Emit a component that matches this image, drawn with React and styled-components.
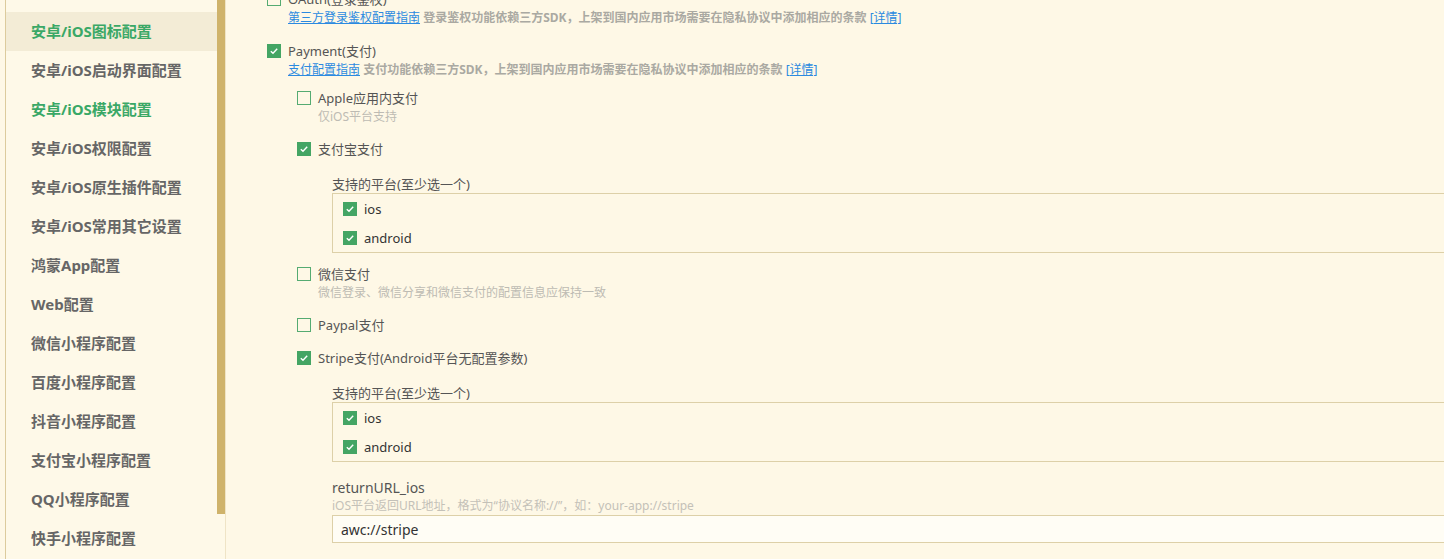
import React from 'react'
import styled, { createGlobalStyle } from 'styled-components'

const GlobalStyle = createGlobalStyle`
  html, body {
    margin: 0;
    padding: 0;
    background: #fef8e6;
  }
  body {
    font-family: "Noto Sans", "Noto Sans CJK SC", sans-serif;
  }
`

const menu = [
  { label: '安卓/iOS图标配置', state: 'active' },
  { label: '安卓/iOS启动界面配置' },
  { label: '安卓/iOS模块配置', state: 'green' },
  { label: '安卓/iOS权限配置' },
  { label: '安卓/iOS原生插件配置' },
  { label: '安卓/iOS常用其它设置' },
  { label: '鸿蒙App配置' },
  { label: 'Web配置' },
  { label: '微信小程序配置' },
  { label: '百度小程序配置' },
  { label: '抖音小程序配置' },
  { label: '支付宝小程序配置' },
  { label: 'QQ小程序配置' },
  { label: '快手小程序配置' },
]

const Check = ({ checked }) => (
  <Box $checked={checked}>
    {checked && (
      <svg width="10" height="10" viewBox="0 0 10 10">
        <polyline points="1.8,5.2 4,7.3 8.2,2.8" fill="none" stroke="#fff" strokeWidth="1.4" />
      </svg>
    )}
  </Box>
)

const Platforms = () => (
  <PlatformSection>
    <PlatformLabel>支持的平台(至少选一个)</PlatformLabel>
    <PlatformBox>
      <Option><Check checked /><Text>ios</Text></Option>
      <Option><Check checked /><Text>android</Text></Option>
    </PlatformBox>
  </PlatformSection>
)

const App = () => {
  return (
    <Page>
      <GlobalStyle />
      <Sidebar>
        <Menu>
          {menu.map((m) => (
            <MenuItem key={m.label} $state={m.state}>{m.label}</MenuItem>
          ))}
        </Menu>
        <Track>
          <Thumb />
        </Track>
      </Sidebar>

      <Main>
        <Content>
          <Block>
            <Row><Check /><Text>OAuth(登录鉴权)</Text></Row>
            <Note>
              <Link>第三方登录鉴权配置指南</Link> 登录鉴权功能依赖三方SDK，上架到国内应用市场需要在隐私协议中添加相应的条款 <Link>[详情]</Link>
            </Note>
          </Block>

          <Block>
            <Row><Check checked /><Text>Payment(支付)</Text></Row>
            <Note>
              <Link>支付配置指南</Link> 支付功能依赖三方SDK，上架到国内应用市场需要在隐私协议中添加相应的条款 <Link>[详情]</Link>
            </Note>

            <Nested>
              <Item>
                <Row><Check /><Text>Apple应用内支付</Text></Row>
                <Desc>仅iOS平台支持</Desc>
              </Item>
              <Item>
                <Row><Check checked /><Text>支付宝支付</Text></Row>
                <Platforms />
              </Item>
              <Item>
                <Row><Check /><Text>微信支付</Text></Row>
                <Desc>微信登录、微信分享和微信支付的配置信息应保持一致</Desc>
              </Item>
              <Item>
                <Row><Check /><Text>Paypal支付</Text></Row>
              </Item>
              <Item>
                <Row><Check checked /><Text>Stripe支付(Android平台无配置参数)</Text></Row>
                <Platforms />
                <Field>
                  <FieldLabel>returnURL_ios</FieldLabel>
                  <FieldDesc>iOS平台返回URL地址，格式为“协议名称://”，如：your-app://stripe</FieldDesc>
                  <Input defaultValue="awc://stripe" />
                </Field>
              </Item>
            </Nested>
          </Block>
        </Content>
      </Main>
    </Page>
  )
}

const Page = styled.div`
  display: flex;
  height: 559px;
  overflow: hidden;
  background: #fef8e6;
`

const Sidebar = styled.aside`
  display: flex;
  flex-shrink: 0;
  margin-left: 5px;
  border-left: 1px solid #dccb9d;
  border-right: 1px solid #efe4c6;
  background: #fef9e8;
`

const Menu = styled.ul`
  list-style: none;
  margin: 0;
  padding: 12px 0 0;
  width: 211px;
`

const MenuItem = styled.li`
  height: 39px;
  box-sizing: border-box;
  line-height: 38px;
  padding: 0 0 1px 25px;
  font-size: 15px;
  font-weight: 700;
  white-space: nowrap;
  color: ${(p) => (p.$state ? '#3aa866' : '#666')};
  background: ${(p) => (p.$state === 'active' ? '#f3ecd6' : 'transparent')};
`

const Track = styled.div`
  width: 8px;
`

const Thumb = styled.div`
  height: 514px;
  background: #cfb36b;
`

const Main = styled.main`
  flex: 1;
  min-width: 0;
  overflow: hidden;
  padding-left: 41px;
`

const Content = styled.div`
  margin-top: -11px;
`

const Block = styled.section`
  margin-bottom: 14px;
`

const Row = styled.label`
  display: flex;
  align-items: center;
  gap: 7px;
  height: 20px;
  font-size: 13px;
  color: #555;
  white-space: nowrap;
`

const Text = styled.span`
  line-height: 18px;
  padding-bottom: 1px;
`

const Box = styled.span`
  box-sizing: border-box;
  width: 14px;
  height: 14px;
  flex-shrink: 0;
  display: grid;
  place-items: center;
  border: 1px solid ${(p) => (p.$checked ? '#44a564' : '#55ab72')};
  background: ${(p) => (p.$checked ? '#44a564' : 'transparent')};
`

const Note = styled.div`
  padding-left: 21px;
  font-size: 12px;
  line-height: 18px;
  font-weight: 700;
  color: #aaa9a2;
  white-space: nowrap;
`

const Link = styled.a`
  color: #2b8ae0;
  font-weight: 400;
  text-decoration: underline;
  cursor: pointer;
`

const Desc = styled.div`
  padding-left: 21px;
  font-size: 12px;
  line-height: 18px;
  color: #bdbbb3;
  white-space: nowrap;
`

const Nested = styled.div`
  margin-top: 9px;
  padding-left: 30px;
`

const Item = styled.div`
  margin-bottom: 13px;
`

const PlatformSection = styled.div`
  margin: 16px -20px -2px 35px;
`

const PlatformLabel = styled.div`
  font-size: 13px;
  line-height: 18px;
  color: #555;
`

const PlatformBox = styled.div`
  display: flex;
  flex-direction: column;
  gap: 9px;
  padding: 5px 10px 4px;
  border: 1px solid #ddd0a8;
`

const Option = styled.label`
  display: flex;
  align-items: center;
  gap: 7px;
  height: 20px;
  font-size: 13px;
  color: #333;
`

const Field = styled.div`
  margin: 19px -20px 0 35px;
`

const FieldLabel = styled.div`
  font-size: 14px;
  line-height: 18px;
  color: #555;
`

const FieldDesc = styled.div`
  font-size: 12px;
  line-height: 18px;
  color: #c4c1b8;
  white-space: nowrap;
`

const Input = styled.input`
  display: block;
  box-sizing: border-box;
  width: 100%;
  height: 28px;
  padding: 0 8px;
  border: 1px solid #ddd0a8;
  background: #fffdf5;
  font-family: inherit;
  font-size: 14px;
  color: #333;
  outline: none;
`

export default App
